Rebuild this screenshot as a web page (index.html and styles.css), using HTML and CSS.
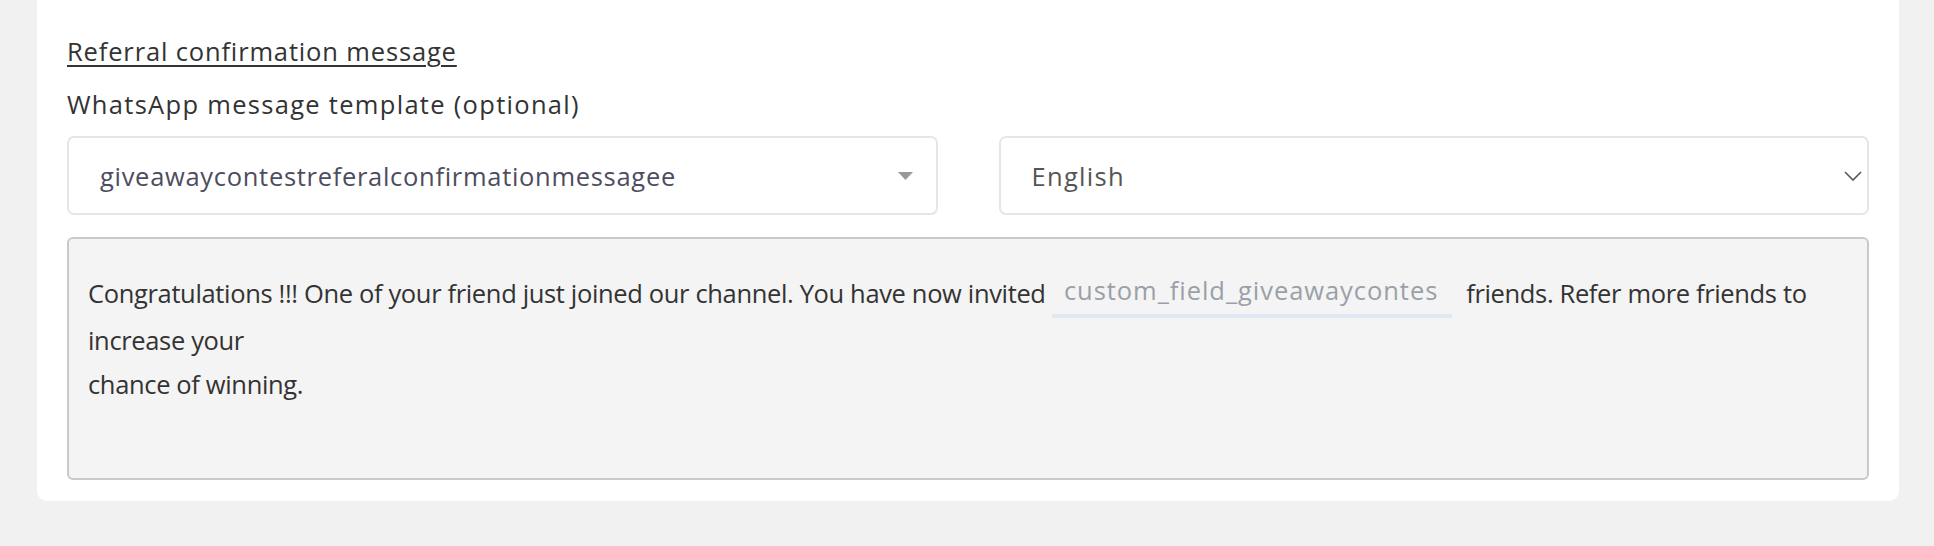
FILE: index.html
```html
<!DOCTYPE html>
<html lang="en">
<head>
<meta charset="utf-8">
<title>Referral confirmation message</title>
<link rel="stylesheet" href="styles.css">
</head>
<body>
<div class="card">
  <a class="section-title" href="#">Referral confirmation message</a>
  <div class="field-label">WhatsApp message template (optional)</div>
  <div class="select-row">
    <div class="select select-template">
      <span class="select-value">giveawaycontestreferalconfirmationmessagee</span>
      <svg class="caret" width="15" height="8" viewBox="0 0 15 8"><path d="M0 0 L15 0 L7.5 8 Z" fill="#999"/></svg>
    </div>
    <div class="select select-lang">
      <span class="select-value lang">English</span>
      <svg class="chevron" width="18" height="10" viewBox="0 0 18 10"><path d="M1 1 L9 9 L17 1" fill="none" stroke="#555" stroke-width="1.6"/></svg>
    </div>
  </div>
  <div class="message">Congratulations !!! One of your friend just joined our channel. You have now invited <span class="chip">custom_field_giveawaycontes</span> friends. Refer more friends to increase your<br>chance of winning.</div>
</div>
</body>
</html>
```
FILE: styles.css
```css
html, body {
  margin: 0;
  padding: 0;
}
body {
  background: #f1f1f1;
  font-family: "Open Sans", Lato, sans-serif;
  color: #333;
  width: 1934px;
  height: 546px;
}
.card {
  background: #fff;
  margin: 0 35px 0 37px;
  padding: 36px 30px 21px 30px;
  border-radius: 0 0 10px 10px;
  display: flex;
  flex-direction: column;
  align-items: flex-start;
}
.section-title {
  font-size: 25.5px;
  line-height: 30px;
  letter-spacing: 0.85px;
  color: #333;
  text-decoration: underline;
  text-decoration-thickness: 2px;
  text-underline-offset: 4px;
}
.field-label {
  margin-top: 22px;
  font-size: 25.5px;
  line-height: 32px;
  letter-spacing: 1.3px;
  color: #333;
}
.select-row {
  margin-top: 16px;
  align-self: stretch;
  display: grid;
  grid-template-columns: 1fr 1fr;
  column-gap: 61px;
}
.select {
  box-sizing: border-box;
  height: 79px;
  border: 2px solid #e6e6e6;
  border-radius: 7px;
  display: flex;
  align-items: center;
  justify-content: space-between;
  padding: 0 23px 0 31px;
}
.select-value {
  font-size: 25.5px;
  letter-spacing: 0.7px;
  color: #4d4d60;
}
.select-value.lang {
  color: #555;
  letter-spacing: 1.3px;
}
.select-lang {
  padding-right: 5px;
}
.message {
  margin-top: 22px;
  align-self: stretch;
  box-sizing: border-box;
  height: 243px;
  background: #f4f4f4;
  border: 2px solid #c9c9c9;
  border-radius: 6px;
  padding: 32px 40px 0 19px;
  font-size: 25.5px;
  line-height: 44px;
  letter-spacing: -0.35px;
  color: #333;
}
.chip {
  display: inline-block;
  box-sizing: border-box;
  width: 400px;
  margin: 0 8px 0 0;
  padding: 0 12px 6.5px 12px;
  line-height: 34px;
  letter-spacing: 0.95px;
  color: #9aa0a8;
  border-bottom: 4px solid #e1e7f3;
  vertical-align: 3px;
  white-space: nowrap;
}
```
